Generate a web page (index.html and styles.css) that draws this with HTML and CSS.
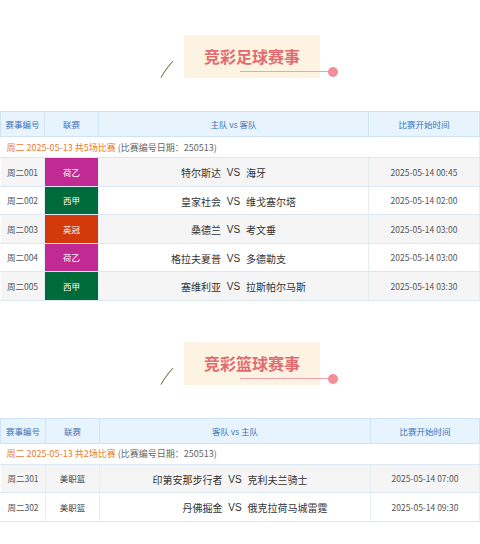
FILE: index.html
```html
<!DOCTYPE html>
<html lang="zh-CN">
<head>
<meta charset="utf-8">
<title>竞彩赛事</title>
<link rel="stylesheet" href="styles.css">
</head>
<body>
<section class="section">
  <div class="title-wrap">
    <svg class="leaf" width="14" height="18" viewBox="0 0 14 18"><path d="M13 1 C10 4 7 8 5 11 C3.5 13.5 2 15.5 1 17.5 C1.8 16 3 13.8 4.6 11.6 C7 8.2 10 4.6 13 1 Z" fill="#5d6b3f" stroke="#6f7d4f" stroke-width="0.8" stroke-linejoin="round"/></svg>
    <div class="title-box">
      <h2 class="title">竞彩足球赛事</h2>
      <span class="title-line"></span>
      <span class="title-dot"></span>
    </div>
  </div>
  <table class="tbl">
    <colgroup><col class="c1"><col class="c2"><col class="c3"><col class="c4"></colgroup>
    <thead>
      <tr><th>赛事编号</th><th>联赛</th><th>主队 vs 客队</th><th>比赛开始时间</th></tr>
    </thead>
    <tbody>
      <tr class="date-row"><td colspan="4"><span class="date-hl">周二 2025-05-13 共5场比赛</span> (比赛编号日期：250513)</td></tr>
      <tr class="odd"><td>周二001</td><td class="lg lg-purple">荷乙</td><td class="teams"><span class="home">特尔斯达</span><span class="vs">VS</span><span class="away">海牙</span></td><td class="time">2025-05-14 00:45</td></tr>
      <tr><td>周二002</td><td class="lg lg-green">西甲</td><td class="teams"><span class="home">皇家社会</span><span class="vs">VS</span><span class="away">维戈塞尔塔</span></td><td class="time">2025-05-14 02:00</td></tr>
      <tr class="odd"><td>周二003</td><td class="lg lg-red">英冠</td><td class="teams"><span class="home">桑德兰</span><span class="vs">VS</span><span class="away">考文垂</span></td><td class="time">2025-05-14 03:00</td></tr>
      <tr><td>周二004</td><td class="lg lg-purple">荷乙</td><td class="teams"><span class="home">格拉夫夏普</span><span class="vs">VS</span><span class="away">多德勒支</span></td><td class="time">2025-05-14 03:00</td></tr>
      <tr class="odd"><td>周二005</td><td class="lg lg-green">西甲</td><td class="teams"><span class="home">塞维利亚</span><span class="vs">VS</span><span class="away">拉斯帕尔马斯</span></td><td class="time">2025-05-14 03:30</td></tr>
    </tbody>
  </table>
</section>
<section class="section">
  <div class="title-wrap">
    <svg class="leaf" width="14" height="18" viewBox="0 0 14 18"><path d="M13 1 C10 4 7 8 5 11 C3.5 13.5 2 15.5 1 17.5 C1.8 16 3 13.8 4.6 11.6 C7 8.2 10 4.6 13 1 Z" fill="#5d6b3f" stroke="#6f7d4f" stroke-width="0.8" stroke-linejoin="round"/></svg>
    <div class="title-box">
      <h2 class="title">竞彩篮球赛事</h2>
      <span class="title-line"></span>
      <span class="title-dot"></span>
    </div>
  </div>
  <table class="tbl">
    <colgroup><col class="c1b"><col class="c2"><col class="c3b"><col class="c4b"></colgroup>
    <thead>
      <tr><th>赛事编号</th><th>联赛</th><th>客队 vs 主队</th><th>比赛开始时间</th></tr>
    </thead>
    <tbody>
      <tr class="date-row"><td colspan="4"><span class="date-hl">周二 2025-05-13 共2场比赛</span> (比赛编号日期：250513)</td></tr>
      <tr class="odd"><td>周二301</td><td class="lg">美职篮</td><td class="teams"><span class="home">印第安那步行者</span><span class="vs">VS</span><span class="away">克利夫兰骑士</span></td><td class="time">2025-05-14 07:00</td></tr>
      <tr><td>周二302</td><td class="lg">美职篮</td><td class="teams"><span class="home">丹佛掘金</span><span class="vs">VS</span><span class="away">俄克拉荷马城雷霆</span></td><td class="time">2025-05-14 09:30</td></tr>
    </tbody>
  </table>
</section>
</body>
</html>
```

FILE: styles.css
```css
* { box-sizing: border-box; }
html, body { margin: 0; padding: 0; background: #ffffff; }
body {
  font-family: "Noto Sans CJK SC", "Noto Sans", sans-serif;
  color: #333;
  width: 480px;
}
.section { padding-top: 35px; }
.section + .section { padding-top: 41px; }
.title-wrap {
  display: flex;
  justify-content: center;
  align-items: flex-start;
  gap: 10px;
  padding-right: 0;
  margin-bottom: 33px;
}
.leaf { margin-top: 25px; display: block; }
.title-box {
  position: relative;
  width: 136px;
  height: 43px;
  background: #fdf3e2;
  display: flex;
  align-items: center;
  justify-content: center;
}
.title {
  margin: 0 0 1px 0;
  font-size: 16px;
  font-weight: 700;
  color: #e26b6f;
  letter-spacing: 0;
  line-height: 1;
}
.title-line {
  position: absolute;
  left: 56px;
  top: 36px;
  width: 90px;
  height: 1px;
  background: #f0a4aa;
}
.title-dot {
  position: absolute;
  left: 144px;
  top: 32px;
  width: 10px;
  height: 10px;
  border-radius: 50%;
  background: #f48e98;
}
.tbl {
  border-collapse: collapse;
  table-layout: fixed;
  width: 479px;
  font-size: 8.5px;
}
.c1 { width: 44px; } .c2 { width: 54px; } .c3 { width: 270px; } .c4 { width: 111px; }
.c1b { width: 45px; } .c3b { width: 271px; } .c4b { width: 109px; }
.tbl th {
  background: #e7f3fd;
  color: #3b72b6;
  font-weight: 400;
  height: 25px;
  border: 1px solid #cfe3f5;
  padding: 0;
  text-align: center;
}
.tbl td {
  height: 28.5px;
  padding: 0;
  text-align: center;
  color: #555;
  border-top: 1px solid #dbe8f4;
  border-bottom: 1px solid #dbe8f4;
  border-left: 1px solid #e4edf6;
  border-right: 1px solid #e4edf6;
}
.tbl td:first-child { border-left-color: transparent; }
.tbl tr.odd td { background: #f5f5f5; }
.tbl tr.date-row td {
  height: 21px;
  text-align: left;
  padding-left: 6px;
  font-size: 9px;
  color: #666;
  background: #fff;
  border-left: 0;
  border-right: 1px solid #e4edf6;
}
.date-hl { color: #ec7b32; }
.tbl td.lg { color: #444; }
.tbl td.lg-purple, .tbl tr.odd td.lg-purple { background: #c02a92; color: #fff; }
.tbl td.lg-green, .tbl tr.odd td.lg-green { background: #006b3a; color: #fff; }
.tbl td.lg-red, .tbl tr.odd td.lg-red { background: #d23a0c; color: #fff; }
.tbl td.teams { font-size: 10px; color: #333; }
.teams { }
.tbl td.teams { display: table-cell; }
.home, .away { display: inline-block; width: 112px; vertical-align: middle; }
.home { text-align: right; }
.away { text-align: left; }
.vs { display: inline-block; width: 25px; text-align: center; vertical-align: middle; font-family: "Liberation Sans", sans-serif; font-size: 10px; }
.tbl td.time { font-size: 8.5px; color: #555; }
```
